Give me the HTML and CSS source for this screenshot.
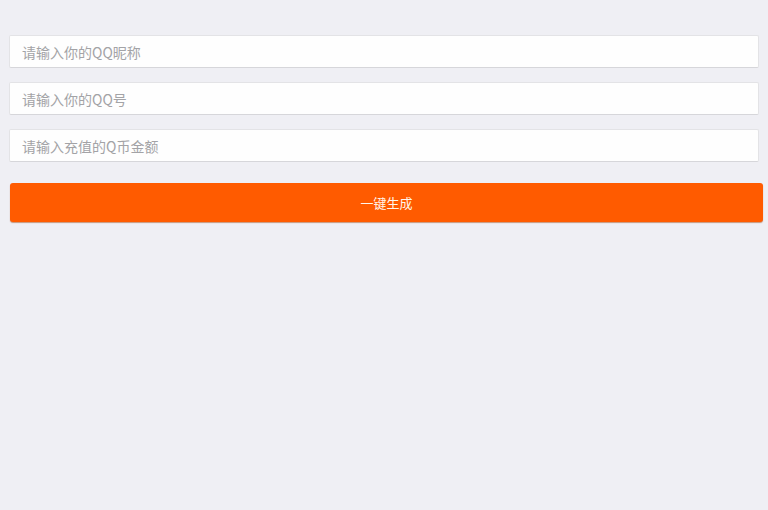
FILE: index.html
```html
<!DOCTYPE html>
<html lang="zh-CN">
<head>
<meta charset="utf-8">
<title>一键生成</title>
<link rel="stylesheet" href="styles.css">
</head>
<body>
<main class="page">
  <form class="form">
    <input class="field" type="text" placeholder="请输入你的QQ昵称">
    <input class="field" type="text" placeholder="请输入你的QQ号">
    <input class="field" type="text" placeholder="请输入充值的Q币金额">
    <button class="submit" type="button">一键生成</button>
  </form>
</main>
</body>
</html>
```

FILE: styles.css
```css
html, body {
  margin: 0;
  padding: 0;
  background: #efeff4;
  font-family: "Noto Sans CJK SC", "Liberation Sans", sans-serif;
}
.page {
  padding: 35px 9px 0 9px;
  height: 475px;
}
.form {
  display: flex;
  flex-direction: column;
}
.field {
  box-sizing: border-box;
  height: 33px;
  width: 750px;
  margin: 0 0 14px 0;
  padding: 0 12px;
  border: 1px solid #e3e3e6;
  border-bottom-color: #d6d6da;
  border-radius: 2px;
  background: #fefefe;
  font-family: inherit;
  font-size: 14px;
  color: #333;
  outline: none;
}
.field::placeholder {
  color: #a3a3a6;
}
.submit {
  box-sizing: border-box;
  margin: 7px 0 0 1px;
  width: 753px;
  height: 39px;
  border: none;
  border-radius: 3px;
  background: #ff5b00;
  color: #fff6ec;
  font-family: inherit;
  font-size: 13px;
  box-shadow: 0 1px 1px rgba(160, 60, 0, 0.5);
}
```
